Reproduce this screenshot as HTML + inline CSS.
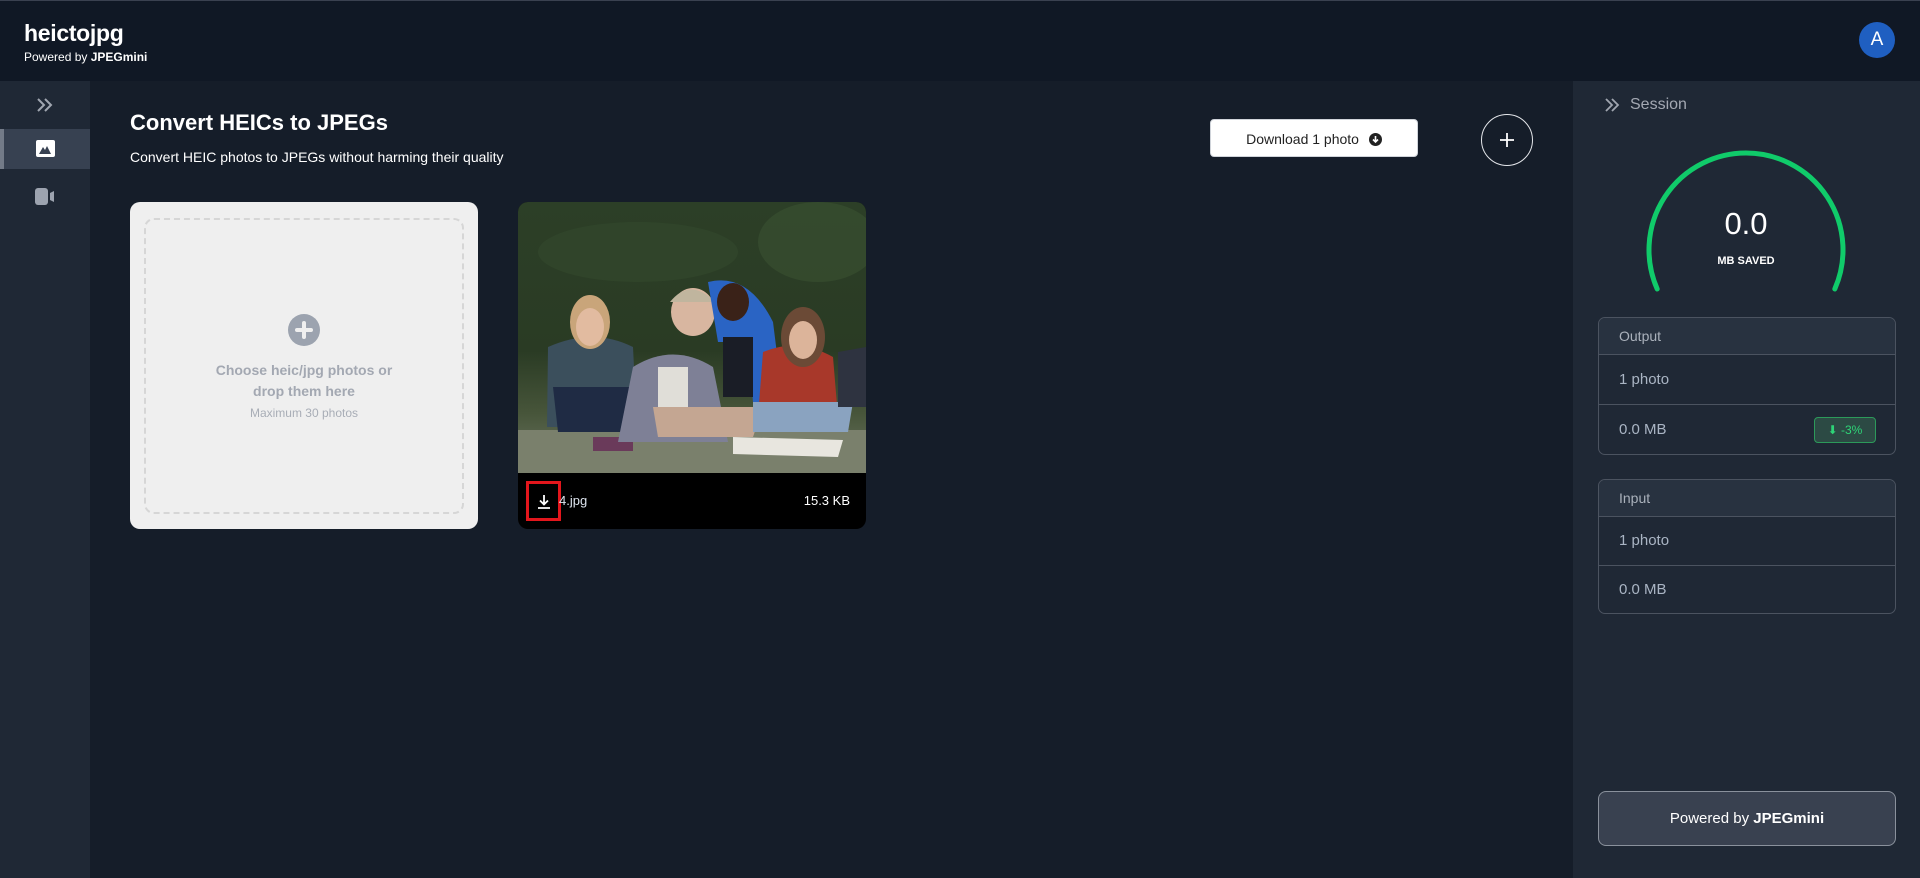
<!DOCTYPE html>
<html><head><meta charset="utf-8"><style>
*{margin:0;padding:0;box-sizing:border-box}
body{width:1920px;height:878px;overflow:hidden;background:#151d29;font-family:"Liberation Sans",Arial,sans-serif;color:#fff;position:relative}
.abs{position:absolute}
</style></head><body>
<div class="abs" style="left:0;top:0;width:1920px;height:81px;background:#101825;border-top:1px solid #3a4150"></div>
<div class="abs" style="left:24px;top:20px;font-size:23px;font-weight:bold;letter-spacing:-0.3px">heictojpg</div>
<div class="abs" style="left:24px;top:50px;font-size:12px">Powered by <b>JPEGmini</b></div>
<div class="abs" style="left:1859px;top:22px;width:36px;height:36px;border-radius:50%;background:#1f5fc1;font-size:19px;text-align:center;line-height:36px">A</div>
<div class="abs" style="left:0;top:81px;width:90px;height:797px;background:#1f2835"></div>
<svg class="abs" style="left:36px;top:97px" width="18" height="16" viewBox="0 0 18 16"><path d="M2 2l6 6-6 6M9 2l6 6-6 6" fill="none" stroke="#a0a6b0" stroke-width="2"/></svg>
<div class="abs" style="left:0;top:129px;width:90px;height:40px;background:#374151"></div>
<div class="abs" style="left:0;top:129px;width:4px;height:40px;background:#737b88"></div>
<svg class="abs" style="left:36px;top:140px" width="19" height="17" viewBox="0 0 19 17"><rect x="0" y="0" width="19" height="17" rx="2" fill="#fff"/><path d="M3 14l4-7 2 3 2-4 4 8z" fill="#374151"/></svg>
<svg class="abs" style="left:35px;top:188px" width="20" height="17" viewBox="0 0 20 17"><rect x="0" y="0" width="13" height="17" rx="3" fill="#9ca3af"/><path d="M15 5l4-2v11l-4-2z" fill="#9ca3af"/></svg>
<div class="abs" style="left:130px;top:110px;font-size:22px;font-weight:bold">Convert HEICs to JPEGs</div>
<div class="abs" style="left:130px;top:149px;font-size:14px">Convert HEIC photos to JPEGs without harming their quality</div>
<div class="abs" style="left:1210px;top:119px;width:208px;height:38px;background:#fff;border-radius:4px;color:#222;font-size:14px;text-align:center;line-height:38px;border:1px solid #d0d4da">Download 1 photo <svg style="vertical-align:-2px;margin-left:6px" width="13" height="13" viewBox="0 0 13 13"><circle cx="6.5" cy="6.5" r="6.5" fill="#222"/><path d="M6.5 3v6M4 6.5l2.5 2.5 2.5-2.5" stroke="#fff" stroke-width="1.6" fill="none"/></svg></div>
<div class="abs" style="left:1481px;top:114px;width:52px;height:52px;border-radius:50%;border:1.5px solid #e5e7eb"></div>
<svg class="abs" style="left:1498px;top:131px" width="18" height="18"><path d="M9 2v14M2 9h14" stroke="#fff" stroke-width="1.8"/></svg>
<div class="abs" style="left:130px;top:202px;width:348px;height:327px;background:#efefef;border-radius:10px"></div>
<div class="abs" style="left:144px;top:218px;width:320px;height:296px;border:2px dashed #d6d6d6;border-radius:10px"></div>
<svg class="abs" style="left:288px;top:314px" width="32" height="32"><circle cx="16" cy="16" r="16" fill="#9ca3af"/><path d="M16 9v14M9 16h14" stroke="#efefef" stroke-width="4" stroke-linecap="round"/></svg>
<div class="abs" style="left:130px;top:360px;width:348px;text-align:center;color:#a3a8b2;font-size:14px;font-weight:bold;line-height:21px">Choose heic/jpg photos or<br>drop them here</div>
<div class="abs" style="left:130px;top:406px;width:348px;text-align:center;color:#a8adb6;font-size:12px">Maximum 30 photos</div>
<div class="abs" style="left:518px;top:202px;width:348px;height:327px;background:#000;border-radius:10px;overflow:hidden">
<svg width="348" height="271" viewBox="0 0 348 271">
<defs><linearGradient id="g" x1="0" y1="0" x2="0" y2="1"><stop offset="0" stop-color="#2c3f27"/><stop offset=".55" stop-color="#2a3b24"/><stop offset=".78" stop-color="#47553a"/><stop offset="1" stop-color="#6f7764"/></linearGradient></defs>
<rect width="348" height="271" fill="url(#g)"/>
<ellipse cx="120" cy="50" rx="100" ry="30" fill="#34492d" opacity=".6"/>
<ellipse cx="300" cy="40" rx="60" ry="40" fill="#3a5232" opacity=".6"/>
<rect y="228" width="348" height="43" fill="#7a806c"/>
<path d="M30 145q45-20 85 0l4 80h-90z" fill="#3b4f5c"/>
<ellipse cx="72" cy="120" rx="20" ry="27" fill="#c9a57a"/>
<ellipse cx="72" cy="125" rx="14" ry="19" fill="#e2bba0"/>
<path d="M35 185h80l-5 45h-70z" fill="#1f2b44"/>
<rect x="75" y="235" width="40" height="14" fill="#6a3a5a"/>
<path d="M115 165q40-25 80 0l15 75h-110z" fill="#7e8096"/>
<path d="M140 165h30v45h-30z" fill="#e0ded8"/>
<ellipse cx="175" cy="110" rx="22" ry="24" fill="#d8b6a0"/>
<path d="M152 100q20-25 45 0" fill="#c0b59e"/>
<path d="M135 205h110l-10 30h-95z" fill="#c4a692"/>
<path d="M190 80q40-10 65 40l10 80h-30l-5-60h-30z" fill="#2a64c4"/>
<path d="M205 135h30v60h-30z" fill="#1a1d26"/>
<ellipse cx="215" cy="100" rx="16" ry="19" fill="#3a2218"/>
<path d="M245 150q35-15 70 5l5 60h-80z" fill="#a8382a"/>
<ellipse cx="285" cy="135" rx="22" ry="30" fill="#6b4a36"/>
<ellipse cx="285" cy="138" rx="14" ry="19" fill="#dcb49a"/>
<path d="M235 200h100l-5 30h-95z" fill="#8aa3c0"/>
<path d="M215 235l110 3-5 17-105-3z" fill="#e8e6df"/>
<path d="M320 150l28-5v60h-28z" fill="#2e3340"/>
</svg></div>
<svg class="abs" style="left:536px;top:494px" width="16" height="16"><path d="M8 1v9M4 6.5l4 4 4-4M2 14h12" stroke="#fff" stroke-width="1.8" fill="none"/></svg>
<div class="abs" style="left:526px;top:481px;width:35px;height:40px;border:3px solid #e3161c"></div>
<div class="abs" style="left:559px;top:493px;font-size:13px;color:#dfe6f0">4.jpg</div>
<div class="abs" style="left:790px;top:493px;width:60px;text-align:right;font-size:13px">15.3 KB</div>
<div class="abs" style="left:1573px;top:81px;width:347px;height:797px;background:#1f2835"></div>
<svg class="abs" style="left:1604px;top:98px" width="16" height="14" viewBox="0 0 16 14"><path d="M2 1l6 6-6 6M8 1l6 6-6 6" fill="none" stroke="#a0a6b0" stroke-width="1.8"/></svg>
<div class="abs" style="left:1630px;top:96px;font-size:16px;color:#a3a8b2">Session</div>
<svg class="abs" style="left:1640px;top:145px" width="212" height="150" viewBox="0 0 212 150"><path d="M17.2 144A97 97 0 1 1 194.8 144" fill="none" stroke="#10cb6a" stroke-width="5" stroke-linecap="round"/></svg>
<div class="abs" style="left:1646px;top:206px;width:200px;text-align:center;font-size:31px">0.0</div>
<div class="abs" style="left:1646px;top:255px;width:200px;text-align:center;font-size:11px;font-weight:bold">MB SAVED</div>
<div class="abs" style="left:1598px;top:317px;width:298px;height:138px;border:1px solid #4b5360;border-radius:7px;overflow:hidden">
<div style="height:37px;background:#283240;border-bottom:1px solid #4b5360;padding-left:20px;line-height:36px;font-size:14px;color:#aab1bb">Output</div>
<div style="height:50px;border-bottom:1px solid #4b5360;padding-left:20px;line-height:49px;font-size:15px;color:#aab5c4">1 photo</div>
<div style="height:49px;padding-left:20px;line-height:49px;font-size:15px;color:#aab5c4;position:relative">0.0 MB<div style="position:absolute;left:215px;top:12px;width:62px;height:26px;border:1px solid #2c9a5a;background:#2c4a44;border-radius:4px;color:#2ed477;font-size:12px;line-height:24px;text-align:center">⬇ -3%</div></div>
</div>
<div class="abs" style="left:1598px;top:479px;width:298px;height:135px;border:1px solid #4b5360;border-radius:7px;overflow:hidden">
<div style="height:37px;background:#283240;border-bottom:1px solid #4b5360;padding-left:20px;line-height:36px;font-size:14px;color:#aab1bb">Input</div>
<div style="height:49px;border-bottom:1px solid #4b5360;padding-left:20px;line-height:48px;font-size:15px;color:#aab5c4">1 photo</div>
<div style="height:47px;padding-left:20px;line-height:47px;font-size:15px;color:#aab5c4">0.0 MB</div>
</div>
<div class="abs" style="left:1598px;top:791px;width:298px;height:55px;background:#394150;border:1px solid #8a919c;border-radius:8px;text-align:center;line-height:53px;font-size:15px">Powered by <b>JPEGmini</b></div>
</body></html>
